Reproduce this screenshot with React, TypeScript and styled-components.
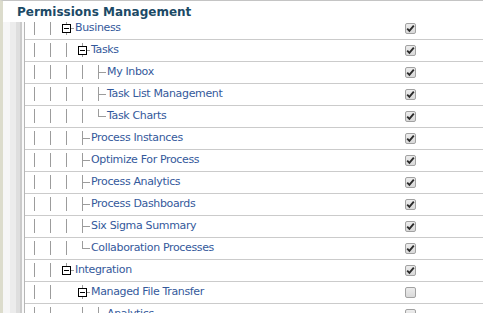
import React from 'react';
import styled, { createGlobalStyle } from 'styled-components';

type GuideKind = 'line' | 'blank' | 'tee' | 'elbow' | 'open' | 'openLast';

interface TreeNode {
  label: string;
  checked: boolean;
  children?: TreeNode[];
}

interface FlatRow {
  label: string;
  checked: boolean;
  guides: GuideKind[];
}

const tree: TreeNode[] = [
  {
    label: 'Business',
    checked: true,
    children: [
      {
        label: 'Tasks',
        checked: true,
        children: [
          { label: 'My Inbox', checked: true },
          { label: 'Task List Management', checked: true },
          { label: 'Task Charts', checked: true },
        ],
      },
      { label: 'Process Instances', checked: true },
      { label: 'Optimize For Process', checked: true },
      { label: 'Process Analytics', checked: true },
      { label: 'Process Dashboards', checked: true },
      { label: 'Six Sigma Summary', checked: true },
      { label: 'Collaboration Processes', checked: true },
    ],
  },
  {
    label: 'Integration',
    checked: true,
    children: [
      {
        label: 'Managed File Transfer',
        checked: false,
        children: [
          { label: 'Analytics', checked: false },
          { label: 'Transfers', checked: false },
        ],
      },
      { label: 'Data Mapping', checked: false },
    ],
  },
];

// two ancestor levels above the visible part keep running down the left
const flatten = (nodes: TreeNode[], prefix: GuideKind[]): FlatRow[] => {
  const rows: FlatRow[] = [];
  nodes.forEach((node, i) => {
    const last = i === nodes.length - 1;
    const hasKids = !!node.children && node.children.length > 0;
    const own: GuideKind = hasKids ? (last ? 'openLast' : 'open') : last ? 'elbow' : 'tee';
    rows.push({ label: node.label, checked: node.checked, guides: [...prefix, own] });
    if (hasKids) {
      rows.push(...flatten(node.children!, [...prefix, last ? 'blank' : 'line']));
    }
  });
  return rows;
};

const rows = flatten(tree, ['line', 'line']);

const Guide: React.FC<{ kind: GuideKind }> = ({ kind }) => (
  <GuideSvg width="16" height="14" viewBox="0 0 16 14">
    {kind === 'line' && <line x1="8.5" y1="0" x2="8.5" y2="14" />}
    {kind === 'tee' && (
      <>
        <line x1="8.5" y1="0" x2="8.5" y2="14" />
        <line x1="8" y1="7.5" x2="16" y2="7.5" />
      </>
    )}
    {kind === 'elbow' && (
      <>
        <line x1="8.5" y1="0" x2="8.5" y2="8" />
        <line x1="8" y1="7.5" x2="16" y2="7.5" />
      </>
    )}
    {(kind === 'open' || kind === 'openLast') && (
      <>
        <line x1="8.5" y1="0" x2="8.5" y2="3" />
        {kind === 'open' && <line x1="8.5" y1="12" x2="8.5" y2="14" />}
        <line x1="13" y1="7.5" x2="16" y2="7.5" />
        <rect x="4.5" y="3.5" width="8" height="8" fill="#fff" stroke="#000" />
        <line x1="6" y1="7.5" x2="11" y2="7.5" stroke="#000" />
      </>
    )}
  </GuideSvg>
);

const Check: React.FC<{ checked: boolean }> = ({ checked }) => (
  <CheckBox>
    {checked && (
      <svg width="9" height="9" viewBox="0 0 9 9">
        <path d="M1.2 4.6 L3.4 6.8 L7.8 1.6" fill="none" stroke="#2b2b2b" strokeWidth="1.9" />
      </svg>
    )}
  </CheckBox>
);

export default function App() {
  return (
    <>
      <GlobalStyle />
      <Page>
        <Title>Permissions Management</Title>
        <Body>
          <Rail />
          <ListWindow>
            <List>
              {rows.map((row, index) => (
                <Row key={index}>
                  <TreeCell>
                    {row.guides.map((g, gi) => (
                      <Guide key={gi} kind={g} />
                    ))}
                    <Label>{row.label}</Label>
                  </TreeCell>
                  <CheckCell>
                    <Check checked={row.checked} />
                  </CheckCell>
                </Row>
              ))}
            </List>
          </ListWindow>
        </Body>
      </Page>
    </>
  );
}

const GlobalStyle = createGlobalStyle`
  html, body {
    margin: 0;
    padding: 0;
    overflow: hidden;
    background: #fff;
  }
`;

const Page = styled.div`
  display: flex;
  flex-direction: column;
  height: 100vh;
  box-sizing: border-box;
  border-left: 3px solid #dcdccc;
  border-top: 1px solid #c4c4c4;
  background: #fff;
`;

const Title = styled.div`
  height: 21px;
  box-sizing: border-box;
  padding: 4px 0 0 14px;
  font-family: 'DejaVu Sans', Verdana, sans-serif;
  font-weight: bold;
  font-size: 12px;
  line-height: 15px;
  color: #1c4a66;
  white-space: nowrap;
`;

const Body = styled.div`
  display: flex;
  flex: 1;
  min-height: 0;
`;

const Rail = styled.div`
  width: 22px;
  flex-shrink: 0;
  background: linear-gradient(
    to right,
    #f6f6f6 0 7px,
    #ececec 7px 13px,
    #dedede 13px 17px,
    #cbcbcb 17px 19px,
    #fafafa 19px 21px,
    #b6b6b6 21px 22px
  );
`;

const ListWindow = styled.div`
  flex: 1;
  overflow: hidden;
`;

const List = styled.div`
  margin-top: -4px;
`;

const Row = styled.div`
  display: grid;
  grid-template-columns: 1fr 145px;
  height: 22px;
  box-sizing: border-box;
  border-bottom: 1px solid #cbcbcb;
`;

const TreeCell = styled.div`
  display: flex;
  align-items: flex-start;
  padding: 3px 0 0 1px;
  min-width: 0;
`;

const GuideSvg = styled.svg`
  flex-shrink: 0;
  display: block;
  shape-rendering: crispEdges;
  stroke: #9c9c9c;
  stroke-width: 1;
`;

const Label = styled.span`
  font-family: 'DejaVu Sans', Verdana, sans-serif;
  font-size: 11px;
  letter-spacing: -0.35px;
  line-height: 14px;
  color: #34599b;
  white-space: nowrap;
  margin-left: 1px;
`;

const CheckCell = styled.div`
  display: flex;
  justify-content: center;
  align-items: center;
`;

const CheckBox = styled.span`
  width: 11px;
  height: 11px;
  box-sizing: border-box;
  border: 1px solid #a2a2a2;
  border-radius: 2px;
  background: linear-gradient(#ececec, #d9d9d9);
  display: flex;
  align-items: center;
  justify-content: center;
`;
